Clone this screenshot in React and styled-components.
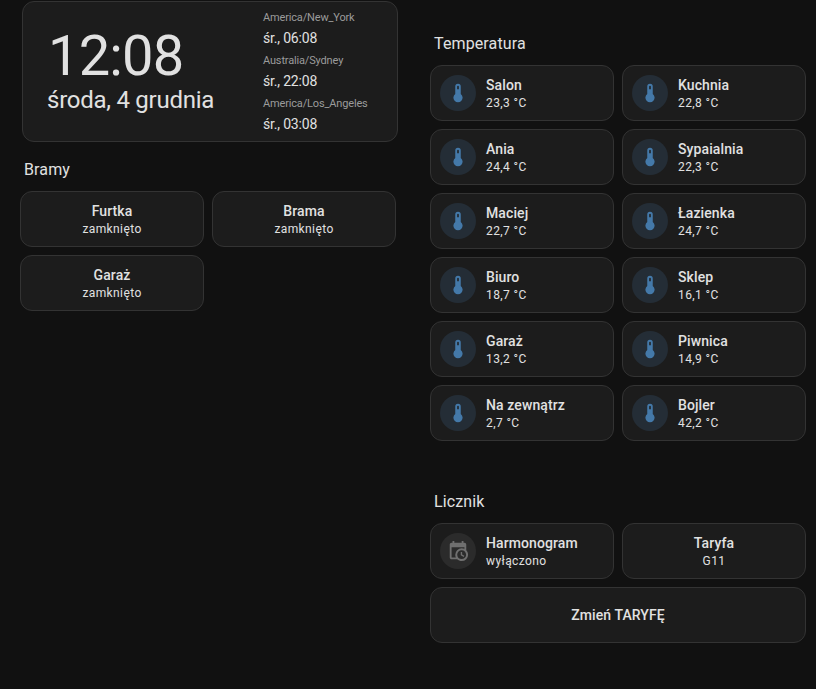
import React from "react"
import styled, { createGlobalStyle } from "styled-components"

const GlobalStyle = createGlobalStyle`
  body {
    margin: 0;
    background: #111111;
    color: #e1e1e1;
    font-family: Roboto, "Noto Sans", sans-serif;
    overflow: hidden;
  }
`

const Dashboard = styled.main`
  box-sizing: border-box;
  display: grid;
  grid-template-columns: 376px 376px;
  column-gap: 34px;
  align-items: start;
  height: 689px;
  padding: 1px 10px 0 20px;
`

const Card = styled.div`
  box-sizing: border-box;
  background: #1c1c1c;
  border: 1px solid #333333;
  border-radius: 12px;
`

const ClockCard = styled(Card)`
  display: flex;
  justify-content: space-between;
  width: 376px;
  height: 141px;
  margin-left: 2px;
  padding: 4px 29px 0 24px;
`

const Clock = styled.div`
  padding-top: 20px;
  white-space: nowrap;
`

const Time = styled.div`
  padding-left: 1px;
  font-size: 56px;
  line-height: 60px;
  letter-spacing: -0.8px;
`

const DateLine = styled.div`
  font-size: 24px;
  line-height: 28px;
  letter-spacing: -0.26px;
`

const Zones = styled.div`
  width: 105px;
`

const ZoneName = styled.div`
  padding-top: 1px;
  color: #9b9b9b;
  font-size: 11px;
  line-height: 22px;
  letter-spacing: -0.16px;
`

const ZoneTime = styled.div`
  padding-bottom: 2px;
  font-size: 14px;
  line-height: 18px;
  letter-spacing: -0.18px;
`

const Section = styled.section`
  padding-top: ${({ $top }) => $top}px;
`

const Title = styled.h2`
  margin: 0 4px 9px;
  font-size: 16px;
  font-weight: 400;
  line-height: 24px;
  letter-spacing: 0.12px;
`

const Grid = styled.div`
  display: grid;
  grid-template-columns: 1fr 1fr;
  gap: 8px;
`

const Tile = styled(Card)`
  display: flex;
  align-items: center;
  justify-content: ${({ $centered }) => ($centered ? "center" : "flex-start")};
  grid-column: ${({ $wide }) => ($wide ? "1 / -1" : "auto")};
  gap: 10px;
  height: 56px;
  padding: 0 9px;
  text-align: ${({ $centered }) => ($centered ? "center" : "left")};
`

const Primary = styled.div`
  font-size: 14px;
  font-weight: 500;
  line-height: 20px;
  letter-spacing: 0.1px;
`

const Secondary = styled.div`
  font-size: 12px;
  line-height: 16px;
  letter-spacing: 0.4px;
`

const Shape = styled.div`
  display: flex;
  align-items: center;
  justify-content: center;
  width: 36px;
  height: 36px;
  border-radius: 50%;
  background: ${({ $active }) => ($active ? "#242d36" : "#2b2b2b")};
  color: ${({ $active }) => ($active ? "#4479a9" : "#6f6f6f")};

  svg {
    width: 22px;
    height: 22px;
    fill: currentColor;
  }
`

const THERMOMETER =
  "M15 13V5A3 3 0 0 0 9 5V13A5 5 0 1 0 15 13M12 4A1 1 0 0 1 13 5V8H11V5A1 1 0 0 1 12 4Z"
const CALENDAR_CLOCK =
  "M15,13H16.5V15.82L18.94,17.23L18.19,18.53L15,16.69V13M19,8H5V19H9.67C9.24,18.09 9,17.07 9,16A7,7 0 0,1 16,9C17.07,9 18.09,9.24 19,9.67V8M5,21C3.89,21 3,20.1 3,19V5C3,3.89 3.89,3 5,3H6V1H8V3H16V1H18V3H19A2,2 0 0,1 21,5V11.1C22.24,12.36 23,14.09 23,16A7,7 0 0,1 16,23C14.09,23 12.36,22.24 11.1,21H5M16,11.15A4.85,4.85 0 0,0 11.15,16C11.15,18.68 13.32,20.85 16,20.85A4.85,4.85 0 0,0 20.85,16C20.85,13.32 18.68,11.15 16,11.15Z"

const zones = [
  ["America/New_York", "śr., 06:08"],
  ["Australia/Sydney", "śr., 22:08"],
  ["America/Los_Angeles", "śr., 03:08"],
]

const gates = ["Furtka", "Brama", "Garaż"]

const temperatures = [
  ["Salon", "23,3 °C"],
  ["Kuchnia", "22,8 °C"],
  ["Ania", "24,4 °C"],
  ["Sypaialnia", "22,3 °C"],
  ["Maciej", "22,7 °C"],
  ["Łazienka", "24,7 °C"],
  ["Biuro", "18,7 °C"],
  ["Sklep", "16,1 °C"],
  ["Garaż", "13,2 °C"],
  ["Piwnica", "14,9 °C"],
  ["Na zewnątrz", "2,7 °C"],
  ["Bojler", "42,2 °C"],
]

const Entity = ({ name, state, icon, active, wide }) => (
  <Tile $centered={!icon} $wide={wide}>
    {icon && (
      <Shape $active={active}>
        <svg viewBox="0 0 24 24">
          <path d={icon} />
        </svg>
      </Shape>
    )}
    <div>
      <Primary>{name}</Primary>
      {state && <Secondary>{state}</Secondary>}
    </div>
  </Tile>
)

const App = () => (
  <>
    <GlobalStyle />
    <Dashboard>
      <div>
        <ClockCard>
          <Clock>
            <Time>12:08</Time>
            <DateLine>środa, 4 grudnia</DateLine>
          </Clock>
          <Zones>
            {zones.map(([zone, time]) => (
              <div key={zone}>
                <ZoneName>{zone}</ZoneName>
                <ZoneTime>{time}</ZoneTime>
              </div>
            ))}
          </Zones>
        </ClockCard>
        <Section $top={16}>
          <Title>Bramy</Title>
          <Grid>
            {gates.map(name => (
              <Entity key={name} name={name} state="zamknięto" />
            ))}
          </Grid>
        </Section>
      </div>
      <div>
        <Section $top={31}>
          <Title>Temperatura</Title>
          <Grid>
            {temperatures.map(([name, state]) => (
              <Entity
                key={name}
                name={name}
                state={state}
                icon={THERMOMETER}
                active
              />
            ))}
          </Grid>
        </Section>
        <Section $top={49}>
          <Title>Licznik</Title>
          <Grid>
            <Entity name="Harmonogram" state="wyłączono" icon={CALENDAR_CLOCK} />
            <Entity name="Taryfa" state="G11" />
            <Entity name="Zmień TARYFĘ" wide />
          </Grid>
        </Section>
      </div>
    </Dashboard>
  </>
)

export default App
